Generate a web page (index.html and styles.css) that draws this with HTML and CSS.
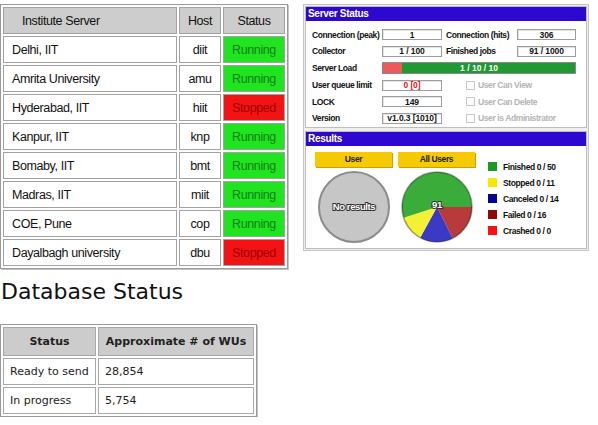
FILE: index.html
```html
<!DOCTYPE html>
<html>
<head>
<meta charset="utf-8">
<link rel="stylesheet" href="styles.css">
</head>
<body>
<div class="top">
  <table class="inst">
    <tr><th class="name">Institute Server</th><th class="host">Host</th><th class="st">Status</th></tr>
    <tr><td class="name">Delhi, IIT</td><td class="host">diit</td><td class="st run">Running</td></tr>
    <tr><td class="name">Amrita University</td><td class="host">amu</td><td class="st run">Running</td></tr>
    <tr><td class="name">Hyderabad, IIT</td><td class="host">hiit</td><td class="st stop">Stopped</td></tr>
    <tr><td class="name">Kanpur, IIT</td><td class="host">knp</td><td class="st run">Running</td></tr>
    <tr><td class="name">Bomaby, IIT</td><td class="host">bmt</td><td class="st run">Running</td></tr>
    <tr><td class="name">Madras, IIT</td><td class="host">miit</td><td class="st run">Running</td></tr>
    <tr><td class="name">COE, Pune</td><td class="host">cop</td><td class="st run">Running</td></tr>
    <tr><td class="name">Dayalbagh university</td><td class="host">dbu</td><td class="st stop">Stopped</td></tr>
  </table>

  <div class="panel">
    <div class="sec server">
      <div class="bar">Server Status</div>
      <div class="grid">
        <span class="lbl">Connection (peak)</span><span class="box">1</span>
        <span class="lbl lbl2">Connection (hits)</span><span class="box">306</span>

        <span class="lbl">Collector</span><span class="box">1 / 100</span>
        <span class="lbl lbl2">Finished jobs</span><span class="box">91 / 1000</span>

        <span class="lbl">Server Load</span>
        <div class="load"><span class="load-used"></span><span class="load-text">1 / 10 / 10</span></div>

        <span class="lbl">User queue limit</span><span class="box red">0 [0]</span>
        <span class="chk"><span class="cb"></span>User Can View</span>

        <span class="lbl">LOCK</span><span class="box">149</span>
        <span class="chk"><span class="cb"></span>User Can Delete</span>

        <span class="lbl">Version</span><span class="box">v1.0.3 [1010]</span>
        <span class="chk"><span class="cb"></span>User is Administrator</span>
      </div>
    </div>

    <div class="sec results">
      <div class="bar">Results</div>
      <div class="res">
        <div class="chart">
          <div class="btn">User</div>
          <svg class="pie" width="74" height="74" viewBox="0 0 74 74">
            <circle cx="37" cy="37" r="35" fill="#c6c6c6" stroke="#8c8c8c" stroke-width="2"/>
            <text x="37" y="40" class="pie-label">No results</text>
          </svg>
        </div>
        <div class="chart">
          <div class="btn">All Users</div>
          <svg class="pie" width="74" height="74" viewBox="-1 -1 74 74">
            <path d="M36 36 L71 36 A35 35 0 0 1 51.73 67.27 Z" fill="#b83a3a"/>
            <path d="M36 36 L51.73 67.27 A35 35 0 0 1 19.19 66.70 Z" fill="#3a3ac4"/>
            <path d="M36 36 L19.19 66.70 A35 35 0 0 1 2.68 46.70 Z" fill="#f4f034"/>
            <path d="M36 36 L2.68 46.70 A35 35 0 1 1 71 36 Z" fill="#3aac3a"/>
            <circle cx="36" cy="36" r="35" fill="none" stroke="rgba(0,0,0,0.35)" stroke-width="1.6"/>
            <text x="36" y="37" class="pie-label">91</text>
          </svg>
        </div>
        <ul class="legend">
          <li><span class="sw sw-fin"></span>Finished 0 / 50</li>
          <li><span class="sw sw-stop"></span>Stopped 0 / 11</li>
          <li><span class="sw sw-can"></span>Canceled 0 / 14</li>
          <li><span class="sw sw-fail"></span>Failed 0 / 16</li>
          <li><span class="sw sw-crash"></span>Crashed 0 / 0</li>
        </ul>
      </div>
    </div>
  </div>
</div>

<h2 class="db-title">Database Status</h2>
<table class="db">
  <tr><th class="c1">Status</th><th class="c2">Approximate # of WUs</th></tr>
  <tr><td>Ready to send</td><td>28,854</td></tr>
  <tr><td>In progress</td><td>5,754</td></tr>
</table>
</body>
</html>
```
FILE: styles.css
```css
html, body {
  margin: 0;
  padding: 0;
  background: #ffffff;
}

.top {
  display: flex;
  align-items: flex-start;
}

/* ---------- Institute table ---------- */
.inst {
  margin-top: 4px;
  border: 1px solid #9a9a9a;
  box-shadow: 1px 1px 0 #c4c4c4;
  border-spacing: 2px;
  font-family: "Liberation Sans", Arial, sans-serif;
  font-size: 12.5px;
  letter-spacing: -0.4px;
  color: #111;
}
.inst th, .inst td {
  border: 1px solid #a2a2a2;
  height: 27px;
  box-sizing: border-box;
  padding: 0;
}
.inst th {
  background: #cdcdcd;
  font-weight: normal;
  text-align: center;
}
.inst th.name {
  text-align: left;
  padding-left: 18px;
}
.inst .name { width: 174px; }
.inst td.name { padding-left: 8px; text-align: left; }
.inst .host { width: 42px; text-align: center; }
.inst .st { width: 62px; text-align: center; }
.inst td.run {
  background: #1fe41f;
  color: #12801a;
}
.inst td.stop {
  background: #f21414;
  color: #a00000;
}

/* ---------- Server panel ---------- */
.panel {
  margin-left: 15px;
  margin-top: 4px;
  width: 286px;
  box-sizing: border-box;
  border: 1px solid #c4c4c4;
  padding: 1px;
  background: #eeeeee;
  font-family: "Liberation Sans", Arial, sans-serif;
  font-weight: bold;
  font-size: 8.5px;
  letter-spacing: -0.4px;
  color: #111;
}
.sec {
  border: 1px solid #bdbdbd;
  background: #ffffff;
}
.sec + .sec {
  margin-top: 3px;
}
.bar {
  background: #2c08d0;
  color: #ffffff;
  height: 14px;
  line-height: 14px;
  padding-left: 2px;
  font-size: 10px;
  letter-spacing: -0.3px;
}
.grid {
  display: grid;
  grid-template-columns: 70px 60px 75px 59px;
  grid-template-rows: 11px 11px 12px 11px 11px 11px;
  row-gap: 5.5px;
  padding: 8px 0 3px 6px;
}
.lbl {
  display: flex;
  align-items: center;
  white-space: nowrap;
}
.lbl2 { padding-left: 4px; }
.box {
  border: 1px solid #9c9c9c;
  box-shadow: inset 1px 1px 0 #e4e4e4;
  box-sizing: border-box;
  display: flex;
  align-items: center;
  justify-content: center;
  background: #fff;
  letter-spacing: -0.1px;
  white-space: pre;
}
.box.red { color: #e01818; }
.load {
  grid-column: 2 / span 3;
  display: flex;
  background: #1f9a32;
  box-sizing: border-box;
  border: 1px solid #8a8a8a;
}
.load-used {
  width: 19px;
  background: #ee5a5a;
}
.load-text {
  flex: 1;
  display: flex;
  align-items: center;
  justify-content: center;
  color: #ffffff;
  margin-right: 19px;
  letter-spacing: 0;
}
.chk {
  grid-column: 3 / span 2;
  display: flex;
  align-items: center;
  padding-left: 24px;
  color: #b4b4b4;
  white-space: nowrap;
}
.cb {
  width: 7px;
  height: 7px;
  border: 1px solid #c8c8c8;
  background: #fbfbfb;
  margin-right: 3px;
}

/* ---------- Results ---------- */
.res {
  display: flex;
  align-items: flex-start;
  padding: 6px 0 4px 9px;
}
.chart {
  width: 77px;
  display: flex;
  flex-direction: column;
  align-items: center;
}
.chart + .chart { margin-left: 6px; }
.btn {
  width: 77px;
  height: 15px;
  line-height: 15px;
  background: #f6ca00;
  box-shadow: 1px 1px 0 #c9a400;
  text-align: center;
  color: #222;
}
.pie {
  margin-top: 3px;
  display: block;
}
.pie-label {
  font-family: "Liberation Sans", Arial, sans-serif;
  font-weight: bold;
  font-size: 9.5px;
  letter-spacing: -0.4px;
  fill: #ffffff;
  stroke: #333333;
  stroke-width: 2px;
  paint-order: stroke;
  text-anchor: middle;
}
.legend {
  list-style: none;
  margin: 7px 0 0 13px;
  padding: 0;
}
.legend li {
  display: flex;
  align-items: center;
  height: 16px;
  white-space: nowrap;
}
.sw {
  width: 9px;
  height: 9px;
  margin-right: 6px;
}
.sw-fin { background: #1c9a24; }
.sw-stop { background: #fbe800; }
.sw-can { background: #040494; }
.sw-fail { background: #8e0a0a; }
.sw-crash { background: #fa1010; }

/* ---------- Database status ---------- */
.db-title {
  font-family: "DejaVu Sans", Verdana, sans-serif;
  font-weight: normal;
  font-size: 22px;
  line-height: 26px;
  margin: 10px 0 19px 1px;
  color: #111;
}
.db {
  border: 1px solid #9a9a9a;
  box-shadow: 1px 1px 0 #c4c4c4;
  border-spacing: 2px;
  font-family: "DejaVu Sans", Verdana, sans-serif;
  font-size: 11px;
  color: #222;
}
.db th, .db td {
  border: 1px solid #a8a8a8;
  box-sizing: border-box;
  padding: 0 6px;
  height: 27px;
  text-align: left;
}
.db th {
  background: #cccccc;
  height: 29px;
  text-align: center;
  font-weight: bold;
}
.db .c1 { width: 93px; }
.db .c2 { width: 156px; }
```
